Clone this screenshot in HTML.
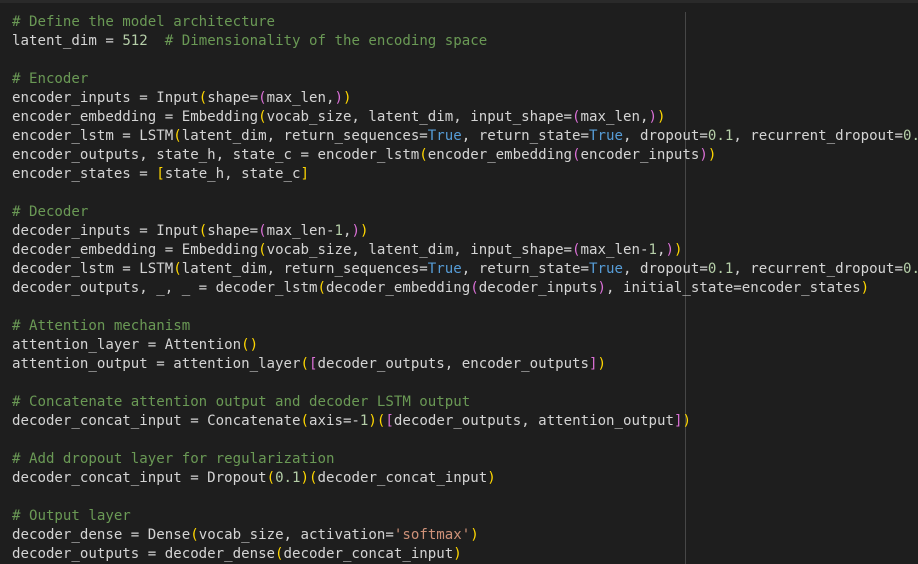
<!DOCTYPE html>
<html><head><meta charset="utf-8"><style>
html,body{margin:0;padding:0;background:#1e1e1e;width:918px;height:564px;overflow:hidden;position:relative}
.top{position:absolute;left:0;top:0;width:918px;height:3px;background:#2a2a2a}
.vl{position:absolute;left:685px;top:12px;width:1px;height:552px;background:#474747}
pre{position:absolute;left:12px;top:13px;margin:0;font-family:"DejaVu Sans Mono","Liberation Mono",monospace;font-size:14.1px;line-height:19px;color:#d4d4d4;white-space:pre}
.c{color:#6a9955}.n{color:#b5cea8}.k{color:#569cd6}.s{color:#ce9178}
.y{color:#ffd700}.p{color:#da70d6}.b{color:#179fff}
</style></head><body><div class="top"></div><div class="vl"></div>
<pre><span class="c"># Define the model architecture</span>
latent_dim = <span class="n">512</span>  <span class="c"># Dimensionality of the encoding space</span>

<span class="c"># Encoder</span>
encoder_inputs = Input<span class="y">(</span>shape=<span class="p">(</span>max_len,<span class="p">)</span><span class="y">)</span>
encoder_embedding = Embedding<span class="y">(</span>vocab_size, latent_dim, input_shape=<span class="p">(</span>max_len,<span class="p">)</span><span class="y">)</span>
encoder_lstm = LSTM<span class="y">(</span>latent_dim, return_sequences=<span class="k">True</span>, return_state=<span class="k">True</span>, dropout=<span class="n">0.1</span>, recurrent_dropout=<span class="n">0.</span>
encoder_outputs, state_h, state_c = encoder_lstm<span class="y">(</span>encoder_embedding<span class="p">(</span>encoder_inputs<span class="p">)</span><span class="y">)</span>
encoder_states = <span class="y">[</span>state_h, state_c<span class="y">]</span>

<span class="c"># Decoder</span>
decoder_inputs = Input<span class="y">(</span>shape=<span class="p">(</span>max_len-<span class="n">1</span>,<span class="p">)</span><span class="y">)</span>
decoder_embedding = Embedding<span class="y">(</span>vocab_size, latent_dim, input_shape=<span class="p">(</span>max_len-<span class="n">1</span>,<span class="p">)</span><span class="y">)</span>
decoder_lstm = LSTM<span class="y">(</span>latent_dim, return_sequences=<span class="k">True</span>, return_state=<span class="k">True</span>, dropout=<span class="n">0.1</span>, recurrent_dropout=<span class="n">0.</span>
decoder_outputs, _, _ = decoder_lstm<span class="y">(</span>decoder_embedding<span class="p">(</span>decoder_inputs<span class="p">)</span>, initial_state=encoder_states<span class="y">)</span>

<span class="c"># Attention mechanism</span>
attention_layer = Attention<span class="y">()</span>
attention_output = attention_layer<span class="y">(</span><span class="p">[</span>decoder_outputs, encoder_outputs<span class="p">]</span><span class="y">)</span>

<span class="c"># Concatenate attention output and decoder LSTM output</span>
decoder_concat_input = Concatenate<span class="y">(</span>axis=-<span class="n">1</span><span class="y">)</span><span class="y">(</span><span class="p">[</span>decoder_outputs, attention_output<span class="p">]</span><span class="y">)</span>

<span class="c"># Add dropout layer for regularization</span>
decoder_concat_input = Dropout<span class="y">(</span><span class="n">0.1</span><span class="y">)</span><span class="y">(</span>decoder_concat_input<span class="y">)</span>

<span class="c"># Output layer</span>
decoder_dense = Dense<span class="y">(</span>vocab_size, activation=<span class="s">'softmax'</span><span class="y">)</span>
decoder_outputs = decoder_dense<span class="y">(</span>decoder_concat_input<span class="y">)</span></pre>
</body></html>
